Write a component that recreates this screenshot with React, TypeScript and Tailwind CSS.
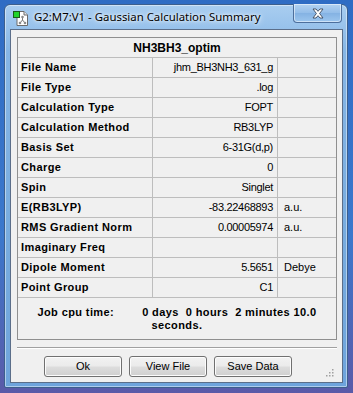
import React from 'react';

type Row = { label: string; value: string; unit?: string };

const rows: Row[] = [
  { label: 'File Name', value: 'jhm_BH3NH3_631_g' },
  { label: 'File Type', value: '.log' },
  { label: 'Calculation Type', value: 'FOPT' },
  { label: 'Calculation Method', value: 'RB3LYP' },
  { label: 'Basis Set', value: '6-31G(d,p)' },
  { label: 'Charge', value: '0' },
  { label: 'Spin', value: 'Singlet' },
  { label: 'E(RB3LYP)', value: '-83.22468893', unit: 'a.u.' },
  { label: 'RMS Gradient Norm', value: '0.00005974', unit: 'a.u.' },
  { label: 'Imaginary Freq', value: '' },
  { label: 'Dipole Moment', value: '5.5651', unit: 'Debye' },
  { label: 'Point Group', value: 'C1' },
];

const AppIcon = () => (
  <svg width="17" height="17" viewBox="0 0 17 17">
    <path d="M4 1.5h7l3.5 3.5v10.5H4z" fill="#fff" stroke="#6b6b6b" />
    <path d="M11 1.5V5h3.5" fill="#e8e8e8" stroke="#6b6b6b" />
    <line x1="9.5" y1="7" x2="9.5" y2="10" stroke="#7a7a7a" strokeWidth="1" />
    <line x1="9.5" y1="10" x2="7" y2="13" stroke="#7a7a7a" strokeWidth="1" />
    <line x1="9.5" y1="10" x2="12" y2="13" stroke="#7a7a7a" strokeWidth="1" />
    <circle cx="9.5" cy="7" r="1.3" fill="#8a8a8a" />
    <circle cx="7" cy="13" r="1.3" fill="#8a8a8a" />
    <circle cx="12" cy="13" r="1.3" fill="#8a8a8a" />
    <rect x="0.5" y="1.5" width="6" height="6" fill="#22d32a" stroke="#1a5a1a" />
  </svg>
);

const CloseGlyph = () => (
  <svg width="12" height="11" viewBox="0 0 12 11">
    <path
      d="M1 1h3l2 2.3L8 1h3L7.6 5.5 11 10H8L6 7.7 4 10H1l3.4-4.5z"
      fill="#fff"
      stroke="#3c4a5e"
      strokeWidth="0.9"
      strokeLinejoin="round"
    />
  </svg>
);

const DialogButton = ({ label }: { label: string }) => (
  <button className="w-[78px] h-[21px] rounded-[3px] border border-[#707070] bg-[linear-gradient(#f2f2f2_0%,#ebebeb_48%,#dddddd_52%,#cfcfcf_100%)] shadow-[inset_0_0_0_1px_#fcfcfc] text-[11px] leading-[19px] text-black">
    {label}
  </button>
);

export default function App() {
  return (
    <div
      className="w-[353px] h-[393px] overflow-hidden bg-[linear-gradient(#2f6cc4_0%,#3b78cc_60%,#5a5aa8_100%)] pl-[4px] pt-[4px]"
      style={{ fontFamily: '"Liberation Sans", Arial, sans-serif' }}
    >
      <div className="w-[344px] h-[384px] rounded-t-[6px] rounded-b-[2px] border border-[#3d5f8c] bg-[linear-gradient(#a9cdf0_0%,#86b6e6_12%,#78acdf_60%,#6ea4dc_100%)] shadow-[inset_0_0_0_1px_rgba(255,255,255,0.45)] flex flex-col pl-[5px] pr-[4px]">
        <div className="h-[24px] flex items-start">
          <div className="pt-[5px] pl-[3px]">
            <AppIcon />
          </div>
          <div
            className="pl-[4px] pt-[2px] text-[11.4px] leading-[20px] text-black [text-shadow:0_0_6px_#ffffff,0_0_3px_#ffffff]"
            style={{ fontFamily: '"Noto Sans", "Open Sans", sans-serif' }}
          >
            G2:M7:V1 - Gaussian Calculation Summary
          </div>
          <div className="flex-1" />
          <div className="mt-[-1px] mr-[1px] w-[49px] h-[19px] rounded-b-[4px] border border-[#4d6f9c] border-t-0 bg-[linear-gradient(#b3d2f1_0%,#93bde9_50%,#84b2e3_51%,#9cc6ee_100%)] shadow-[inset_0_0_0_1px_rgba(255,255,255,0.5)] flex items-center justify-center">
            <CloseGlyph />
          </div>
        </div>

        <div className="relative w-[333px] h-[354px] border border-[#5b6e89] bg-[#f0f0f0] pl-[6px] pt-[7px]">
          <div className="w-[320px] border border-[#8f8f8f]">
            <div className="h-[19px] flex items-center justify-center text-[12px] font-bold text-black">
              NH3BH3_optim
            </div>
            {rows.map((r) => (
              <div key={r.label} className="h-[20px] border-t border-[#bdbdbd] flex text-[11px] text-black">
                <div className="w-[134px] pl-[3px] font-bold tracking-[0.4px] flex items-center">{r.label}</div>
                <div className="w-[125px] border-l border-[#bdbdbd] pr-[4px] tracking-[-0.3px] flex items-center justify-end">
                  {r.value}
                </div>
                <div className="flex-1 border-l border-[#bdbdbd] pl-[6px] flex items-center">{r.unit}</div>
              </div>
            ))}
            <div className="h-[42px] border-t border-[#bdbdbd] pt-[8px] text-[11px] leading-[13px] font-bold tracking-[0.4px] text-black">
              <div className="flex justify-center gap-[28px] whitespace-pre">
                <span>Job cpu time:</span>
                <span>0 days  0 hours  2 minutes 10.0</span>
              </div>
              <div className="text-center">seconds.</div>
            </div>
          </div>

          <div className="mt-[7px] w-[320px] h-[2px] border-t border-[#a0a0a0] border-b border-b-white" />

          <div className="mt-[7px] pl-[27px] flex gap-[7px]">
            <DialogButton label="Ok" />
            <DialogButton label="View File" />
            <DialogButton label="Save Data" />
          </div>

          <svg className="absolute right-[8px] bottom-[5px]" width="9" height="9" viewBox="0 0 9 9">
            {[
              [7, 1],
              [4, 4],
              [7, 4],
              [1, 7],
              [4, 7],
              [7, 7],
            ].map(([x, y]) => (
              <rect key={`${x}-${y}`} x={x} y={y} width="1.5" height="1.5" fill="#a0a0a0" />
            ))}
          </svg>
        </div>
      </div>
    </div>
  );
}
